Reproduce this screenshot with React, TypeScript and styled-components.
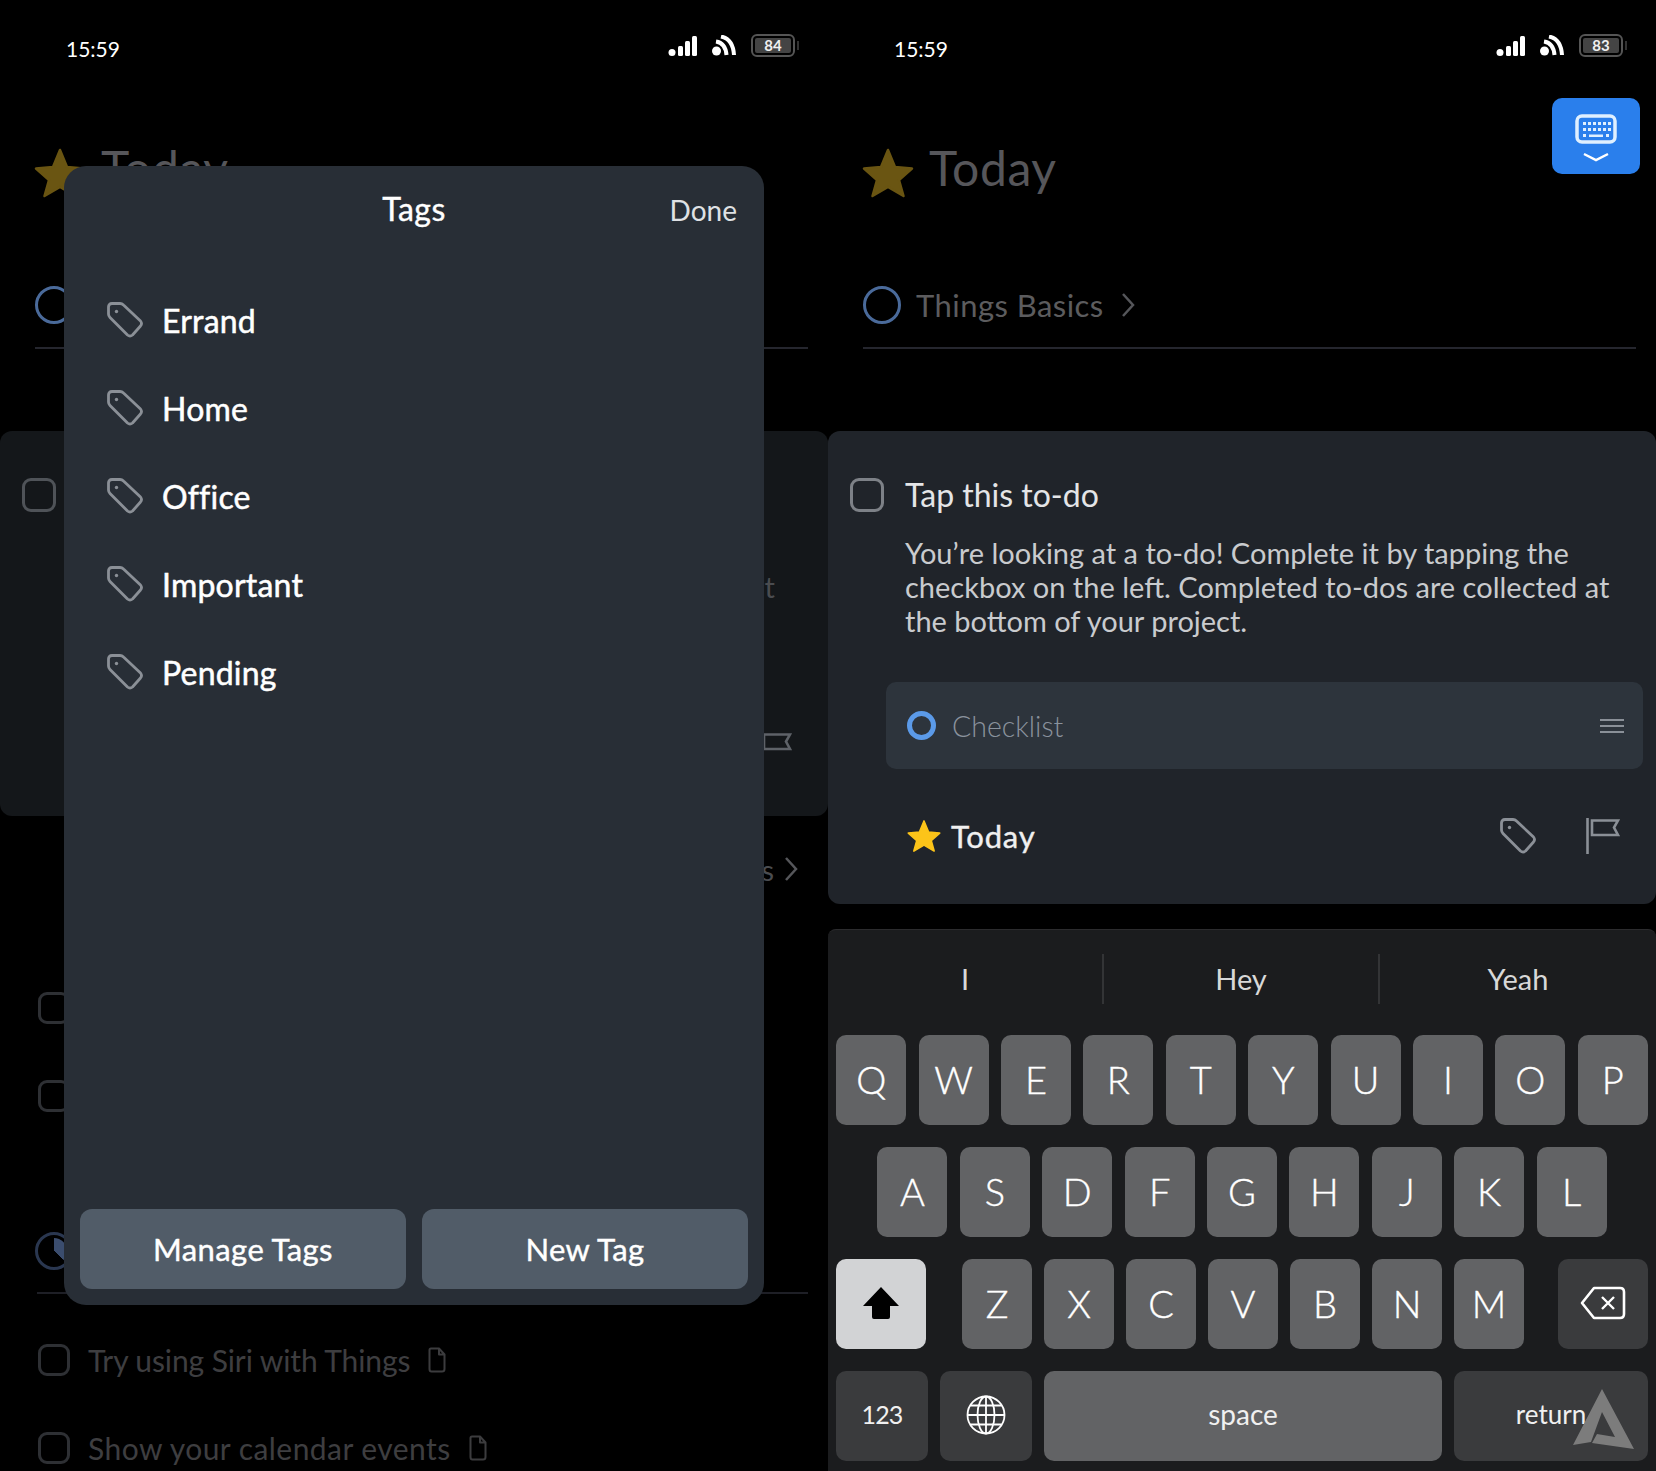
import React from 'react';
import styled, { createGlobalStyle } from 'styled-components';

const GlobalStyle = createGlobalStyle`
  html, body {
    margin: 0;
    padding: 0;
    background: #000;
  }
  body {
    font-family: Lato, "Noto Sans", sans-serif;
    color: #fff;
  }
`;

const Page = styled.div`
  display: grid;
  grid-template-columns: 828px 828px;
  width: 1656px;
  height: 1471px;
  overflow: hidden;
  background: #000;
`;

const Phone = styled.div`
  position: relative;
  display: flex;
  flex-direction: column;
  height: 1471px;
  overflow: hidden;
`;

/* status bar */
const StatusBar = styled.div`
  display: flex;
  justify-content: space-between;
  align-items: flex-start;
  height: 123px;
  padding: 34px 29px 0 66px;
  box-sizing: border-box;
`;

const Time = styled.span`
  font-size: 21px;
  line-height: 30px;
`;

const StatusIcons = styled.div`
  display: flex;
  align-items: center;
  height: 23px;
`;

const Battery = styled.div`
  display: flex;
  justify-content: center;
  align-items: center;
  width: 44px;
  height: 23px;
  margin-left: 15px;
  box-sizing: border-box;
  border: 2px solid #555;
  border-radius: 6px;
  padding: 2px;
`;

const BatteryLevel = styled.span`
  width: 100%;
  height: 100%;
  background: #444;
  border-radius: 2px;
  color: #f0f0f0;
  font-size: 15px;
  font-weight: 700;
  line-height: 15px;
  text-align: center;
`;

const BatteryNub = styled.span`
  width: 2px;
  height: 9px;
  margin-left: 2px;
  background: #333;
`;

/* page heading */
const Heading = styled.div`
  display: flex;
  align-items: center;
  gap: 15px;
  height: 100px;
  padding-left: 34px;
`;

const HeadingText = styled.span`
  margin-top: -10px;
  font-size: 48px;
  line-height: 56px;
  letter-spacing: 0.6px;
  color: #56565a;
`;

const ProjectRow = styled.div`
  display: flex;
  align-items: center;
  height: 85px;
  padding-bottom: 2px;
  box-sizing: border-box;
  margin: 41px 20px 0 35px;
  border-bottom: 2px solid #25262e;
`;

const RingIcon = styled.span<{ $color: string; $wedge?: string }>`
  width: 38px;
  height: 38px;
  box-sizing: border-box;
  border: 3px solid ${p => p.$color};
  border-radius: 50%;
  flex: none;
  ${p =>
    p.$wedge
      ? `padding: 3px; background: conic-gradient(${p.$wedge} 0 135deg, transparent 135deg) content-box;`
      : ''}
`;

const ProjectName = styled.span`
  margin-left: 15px;
  font-size: 31px;
  letter-spacing: 0.45px;
  color: #5c5c5e;
`;

const ChevronWrap = styled.span<{ $gap: number }>`
  display: flex;
  margin-left: ${p => p.$gap}px;
`;

/* to-do card */
const Card = styled.div<{ $height: number; $bg: string }>`
  display: flex;
  flex-direction: column;
  height: ${p => p.$height}px;
  margin-top: 82px;
  padding-top: 47px;
  box-sizing: border-box;
  background: ${p => p.$bg};
  border-radius: 12px;
`;

const TodoHead = styled.div`
  display: flex;
  align-items: center;
  gap: 21px;
  padding-left: 22px;
`;

const CheckBox = styled.span<{ $size?: number; $color: string }>`
  display: block;
  flex: none;
  width: ${p => p.$size ?? 34}px;
  height: ${p => p.$size ?? 34}px;
  box-sizing: border-box;
  border: 3px solid ${p => p.$color};
  border-radius: 9px;
`;

const TodoTitle = styled.span`
  font-size: 32px;
  line-height: 34px;
  color: #e4e5e7;
`;

const Notes = styled.p`
  margin: 24px 0 0 77px;
  font-size: 29px;
  line-height: 34px;
  color: #c9cbce;
  white-space: nowrap;
`;

const Checklist = styled.div`
  display: flex;
  align-items: center;
  height: 87px;
  margin: 44px 13px 0 58px;
  padding: 0 19px 0 21px;
  box-sizing: border-box;
  background: #2d343c;
  border-radius: 10px;
`;

const ChecklistRing = styled.span`
  flex: none;
  width: 29px;
  height: 29px;
  box-sizing: border-box;
  border: 5px solid #5b9ae8;
  border-radius: 50%;
`;

const ChecklistText = styled.span`
  flex: 1;
  margin-left: 16px;
  font-size: 28.5px;
  font-weight: 300;
  color: #8a929c;
`;

const Grip = styled.span`
  position: relative;
  width: 24px;
  height: 14px;
  box-sizing: border-box;
  border-top: 2px solid #8a9098;
  border-bottom: 2px solid #8a9098;
  &::after {
    content: '';
    position: absolute;
    left: 0;
    right: 0;
    top: 4px;
    height: 2px;
    background: #8a9098;
  }
`;

const WhenRow = styled.div`
  display: flex;
  align-items: center;
  height: 36px;
  margin-top: 49px;
  padding: 0 36px 0 79px;
`;

const WhenLabel = styled.span`
  flex: 1;
  margin-left: 10px;
  font-size: 31px;
  letter-spacing: 0.8px;
  color: #f0f0f0;
  -webkit-text-stroke: 0.4px #f0f0f0;
`;

const WhenActions = styled.div`
  display: flex;
  gap: 50px;
`;

/* keyboard */
const KeyboardToggle = styled.div`
  position: absolute;
  top: 98px;
  right: 16px;
  display: flex;
  justify-content: center;
  align-items: center;
  width: 88px;
  height: 76px;
  background: #2a7fec;
  border-radius: 10px;
`;

const Keyboard = styled.div`
  position: relative;
  flex: 1;
  display: flex;
  flex-direction: column;
  margin-top: 25px;
  background: #1b1c1e;
  border-top: 1px solid #2c2c2e;
  border-radius: 8px 8px 0 0;
`;

const Suggestions = styled.div`
  display: grid;
  grid-template-columns: 274px 276px 1fr;
  align-items: center;
  height: 105px;
`;

const Suggestion = styled.span<{ $divider?: boolean }>`
  height: 50px;
  line-height: 50px;
  margin-top: -8px;
  text-align: center;
  font-size: 29px;
  color: #d8d8d8;
  border-left: ${p => (p.$divider ? '2px solid #333436' : 'none')};
`;

const KeyRows = styled.div`
  display: flex;
  flex-direction: column;
  gap: 22px;
`;

const KeyRow = styled.div<{ $between?: boolean; $gap?: number }>`
  display: flex;
  justify-content: ${p => (p.$between ? 'space-between' : 'center')};
  gap: ${p => p.$gap ?? 12}px;
  padding: 0 8px;
`;

const Letters = styled.div`
  display: flex;
  gap: 12px;
  margin-left: 2px;
`;

const Key = styled.div<{ $tone?: 'letter' | 'dark' | 'light'; $width?: number; $fill?: boolean }>`
  display: flex;
  justify-content: center;
  align-items: center;
  flex: ${p => (p.$fill ? '1' : 'none')};
  width: ${p => p.$width ?? 70}px;
  height: 90px;
  padding-bottom: 3px;
  box-sizing: border-box;
  border-radius: 10px;
  font-size: 38px;
  font-weight: 300;
  color: #fff;
  -webkit-text-stroke: 0.4px #fff;
  background: ${p =>
    p.$tone === 'dark' ? '#3a3b3d' : p.$tone === 'light' ? '#d2d3d5' : '#626365'};
`;

const KeyLabel = styled.span<{ $size: number; $track?: number }>`
  margin-top: -2px;
  font-size: ${p => p.$size}px;
  font-weight: 400;
  letter-spacing: ${p => p.$track ?? 0}px;
  color: #f0f0f0;
  -webkit-text-stroke: 0;
`;

const Watermark = styled.div`
  position: absolute;
  right: 22px;
  bottom: 22px;
  display: flex;
`;

/* left phone, everything dimmed behind the sheet */
const StubRow = styled.div<{ $top: number; $right: number }>`
  display: flex;
  justify-content: flex-end;
  align-items: center;
  height: 36px;
  margin-top: ${p => p.$top}px;
  padding-right: ${p => p.$right}px;
  font-size: 29px;
  color: #4a4c50;
`;

const DimBox = styled.div<{ $top: number }>`
  margin: ${p => p.$top}px 0 0 38px;
`;

const DimProject = styled.div`
  display: flex;
  align-items: center;
  height: 43px;
  margin: 117px 20px 0 35px;
`;

const DimDivider = styled.div`
  height: 2px;
  margin: 20px 20px 0 37px;
  background: #1e1f26;
`;

const DimTodo = styled.div<{ $top: number; $track: number }>`
  display: flex;
  align-items: center;
  gap: 18px;
  margin: ${p => p.$top}px 0 0 38px;
  font-size: 30px;
  line-height: 34px;
  letter-spacing: ${p => p.$track}px;
  color: #3e3e40;
`;

/* tags sheet */
const Sheet = styled.div`
  position: absolute;
  top: 166px;
  left: 64px;
  display: flex;
  flex-direction: column;
  width: 700px;
  height: 1139px;
  background: #282e36;
  border-radius: 22px;
`;

const SheetHeader = styled.div`
  display: grid;
  grid-template-columns: 1fr auto 1fr;
  align-items: center;
  height: 84px;
  padding: 0 27px;
`;

const SheetTitle = styled.span`
  font-size: 32px;
  letter-spacing: 0.5px;
  color: #fff;
  -webkit-text-stroke: 0.4px #fff;
`;

const DoneLink = styled.span`
  justify-self: end;
  margin-top: 4px;
  font-size: 28px;
  color: #dfe1e4;
`;

const TagList = styled.ul`
  flex: 1;
  margin: 26px 0 0;
  padding: 0 0 0 43px;
  list-style: none;
`;

const TagItem = styled.li`
  display: flex;
  align-items: center;
  gap: 19px;
  height: 88px;
  font-size: 32px;
  letter-spacing: 0.2px;
  color: #fff;
  -webkit-text-stroke: 0.5px #fff;
`;

const SheetFooter = styled.div`
  display: grid;
  grid-template-columns: 1fr 1fr;
  gap: 16px;
  padding: 0 16px 16px;
`;

const SheetButton = styled.button`
  height: 80px;
  border: 0;
  border-radius: 12px;
  background: #515c68;
  font-family: inherit;
  font-size: 31px;
  letter-spacing: 0.4px;
  color: #fff;
  -webkit-text-stroke: 0.4px #fff;
`;

/* drawings */
const Star = ({ size, color }: { size: number; color: string }) => (
  <svg width={size} height={size} viewBox="0 0 52 52" style={{ flex: 'none' }}>
    <path
      d="M26 3l7 17 17 1.5-13 11.5 4.5 16L26 40l-15.5 9 4.5-16L2 21.5 19 20z"
      fill={color}
      stroke={color}
      strokeWidth="2.5"
      strokeLinejoin="round"
    />
  </svg>
);

const Tag = ({ color = '#8b9097' }: { color?: string }) => (
  <svg width="36" height="36" viewBox="0 0 36 36" fill="none" style={{ flex: 'none' }}>
    <path
      d="M5 1.5H13Q15 1.5 16.5 3L33.5 19Q35.5 21.5 33.5 24L25.5 33Q23 35 20.5 33L3 15.5Q1.5 14 1.5 12V5Q1.5 1.5 5 1.5Z"
      stroke={color}
      strokeWidth="2.8"
      strokeLinejoin="round"
    />
    <circle cx="9.5" cy="9.5" r="1.7" fill={color} />
  </svg>
);

const Flag = ({ color = '#8b9097' }: { color?: string }) => (
  <svg width="34" height="36" viewBox="0 0 34 36" fill="none">
    <path d="M1.5 0v36" stroke={color} strokeWidth="2.6" />
    <path d="M6 2.5h26l-4 7 4 7.5H6z" stroke={color} strokeWidth="2.6" />
  </svg>
);

const Chevron = ({ color }: { color: string }) => (
  <svg width="14" height="26" viewBox="0 0 14 26" fill="none">
    <path d="M2 2l10 11L2 24" stroke={color} strokeWidth="2.5" />
  </svg>
);

const DocIcon = ({ color }: { color: string }) => (
  <svg width="18" height="26" viewBox="0 0 18 26" fill="none">
    <path
      d="M3 1.5h8l5.5 6V22q0 2.5-2.5 2.5H3.5Q1.5 24.5 1.5 22V3q0-1.5 1.5-1.5zM11 1.5v6h5.5"
      stroke={color}
      strokeWidth="2"
      strokeLinejoin="round"
    />
  </svg>
);

const SignalIcon = () => (
  <svg width="30" height="20" viewBox="0 0 30 20" fill="#fff">
    <circle cx="4" cy="16.5" r="3.5" />
    <rect x="10" y="10" width="5" height="10" rx="1.5" />
    <rect x="17" y="5" width="5" height="15" rx="1.5" />
    <rect x="24" y="0" width="5" height="20" rx="1.5" />
  </svg>
);

const WifiIcon = () => (
  <svg width="24" height="21" viewBox="0 0 24 21" fill="none" style={{ marginLeft: 14 }}>
    <circle cx="4.5" cy="16" r="4.5" fill="#fff" />
    <path d="M4 6.5Q13.5 8 14.5 20" stroke="#fff" strokeWidth="4" />
    <path d="M9 1.5Q21 4 22 20" stroke="#fff" strokeWidth="4" />
  </svg>
);

const KeyboardGlyph = () => (
  <svg width="42" height="48" viewBox="0 0 42 48" fill="none" style={{ marginTop: 4 }}>
    <rect x="2" y="2" width="38" height="26" rx="5" stroke="#dff0ff" strokeWidth="3.5" />
    <g fill="#dff0ff">
      {[8, 14].flatMap(y =>
        [8, 13, 18, 23, 28, 33].map(x => <rect key={`${x}-${y}`} x={x} y={y} width="3" height="3" />)
      )}
      <rect x="8" y="20" width="3" height="3" />
      <rect x="14" y="20.5" width="14" height="2.5" />
      <rect x="31" y="20" width="3" height="3" />
    </g>
    <path d="M9 40l12 6 12-6" stroke="#fff" strokeWidth="2.5" />
  </svg>
);

const ShiftArrow = () => (
  <svg width="38" height="34" viewBox="0 0 38 34">
    <path d="M19 1L37 20H28V31q0 2-2 2H12q-2 0-2-2V20H1z" fill="#000" />
  </svg>
);

const BackspaceIcon = () => (
  <svg width="46" height="34" viewBox="0 0 46 34" fill="none">
    <path
      d="M14 2h26q4 0 4 4v22q0 4-4 4H14L2 17z"
      stroke="#fff"
      strokeWidth="2.6"
      strokeLinejoin="round"
    />
    <path d="M22 11l12 12M34 11L22 23" stroke="#fff" strokeWidth="2.4" />
  </svg>
);

const GlobeIcon = () => (
  <svg width="40" height="40" viewBox="0 0 40 40" fill="none" stroke="#fff" strokeWidth="1.8">
    <circle cx="20" cy="20" r="18.5" />
    <ellipse cx="20" cy="20" rx="8.5" ry="18.5" />
    <path d="M20 1.5v37M1.5 20h37M4.5 10.5h31M4.5 29.5h31" />
  </svg>
);

const SiteMark = () => (
  <svg width="61" height="60" viewBox="0 0 61 60" fill="#7c7c7c">
    <path d="M29 0L61 60L19 54L24 45L42 48L29 23L18 53L0 56Z" />
  </svg>
);

const TAGS = ['Errand', 'Home', 'Office', 'Important', 'Pending'];
const ROW_ONE = ['Q', 'W', 'E', 'R', 'T', 'Y', 'U', 'I', 'O', 'P'];
const ROW_TWO = ['A', 'S', 'D', 'F', 'G', 'H', 'J', 'K', 'L'];
const ROW_THREE = ['Z', 'X', 'C', 'V', 'B', 'N', 'M'];

const Status = ({ level }: { level: number }) => (
  <StatusBar>
    <Time>15:59</Time>
    <StatusIcons>
      <SignalIcon />
      <WifiIcon />
      <Battery>
        <BatteryLevel>{level}</BatteryLevel>
      </Battery>
      <BatteryNub />
    </StatusIcons>
  </StatusBar>
);

const TodayHeading = () => (
  <Heading>
    <Star size={52} color="#6a5512" />
    <HeadingText>Today</HeadingText>
  </Heading>
);

function TagsPhone(): JSX.Element {
  return (
    <Phone>
      <Status level={84} />
      <TodayHeading />
      <ProjectRow>
        <RingIcon $color="#4a6a9a" />
      </ProjectRow>
      <Card $height={385} $bg="#14171a">
        <TodoHead>
          <CheckBox $color="#4f5358" />
        </TodoHead>
        <StubRow $top={56} $right={53}>t</StubRow>
        <StubRow $top={128} $right={36}>
          <Flag color="#5e6268" />
        </StubRow>
      </Card>
      <StubRow $top={35} $right={30}>
        <span>s</span>
        <ChevronWrap $gap={10}>
          <Chevron color="#55565a" />
        </ChevronWrap>
      </StubRow>
      <DimBox $top={105}>
        <CheckBox $size={32} $color="#2e3034" />
      </DimBox>
      <DimBox $top={56}>
        <CheckBox $size={32} $color="#2e3034" />
      </DimBox>
      <DimProject>
        <RingIcon $color="#2a3750" $wedge="#3b4d6e" />
      </DimProject>
      <DimDivider />
      <DimTodo $top={49} $track={-0.1}>
        <CheckBox $size={32} $color="#2e3034" />
        Try using Siri with Things
        <DocIcon color="#3c3c3e" />
      </DimTodo>
      <DimTodo $top={54} $track={0.45}>
        <CheckBox $size={32} $color="#2e3034" />
        Show your calendar events
        <DocIcon color="#3c3c3e" />
      </DimTodo>

      <Sheet>
        <SheetHeader>
          <span />
          <SheetTitle>Tags</SheetTitle>
          <DoneLink>Done</DoneLink>
        </SheetHeader>
        <TagList>
          {TAGS.map(tag => (
            <TagItem key={tag}>
              <Tag />
              {tag}
            </TagItem>
          ))}
        </TagList>
        <SheetFooter>
          <SheetButton>Manage Tags</SheetButton>
          <SheetButton>New Tag</SheetButton>
        </SheetFooter>
      </Sheet>
    </Phone>
  );
}

function EditPhone(): JSX.Element {
  return (
    <Phone>
      <Status level={83} />
      <TodayHeading />
      <ProjectRow>
        <RingIcon $color="#4a6a9a" />
        <ProjectName>Things Basics</ProjectName>
        <ChevronWrap $gap={17}>
          <Chevron color="#55565a" />
        </ChevronWrap>
      </ProjectRow>
      <KeyboardToggle>
        <KeyboardGlyph />
      </KeyboardToggle>

      <Card $height={473} $bg="#20242a">
        <TodoHead>
          <CheckBox $color="#7d8187" />
          <TodoTitle>Tap this to-do</TodoTitle>
        </TodoHead>
        <Notes>
          You’re looking at a to-do! Complete it by tapping the
          <br />
          checkbox on the left. Completed to-dos are collected at
          <br />
          the bottom of your project.
        </Notes>
        <Checklist>
          <ChecklistRing />
          <ChecklistText>Checklist</ChecklistText>
          <Grip />
        </Checklist>
        <WhenRow>
          <Star size={34} color="#fcc419" />
          <WhenLabel>Today</WhenLabel>
          <WhenActions>
            <Tag />
            <Flag />
          </WhenActions>
        </WhenRow>
      </Card>

      <Keyboard>
        <Suggestions>
          <Suggestion>I</Suggestion>
          <Suggestion $divider>Hey</Suggestion>
          <Suggestion $divider>Yeah</Suggestion>
        </Suggestions>
        <KeyRows>
          <KeyRow $gap={12.4}>
            {ROW_ONE.map(k => (
              <Key key={k}>{k}</Key>
            ))}
          </KeyRow>
          <KeyRow $gap={12.4}>
            {ROW_TWO.map(k => (
              <Key key={k}>{k}</Key>
            ))}
          </KeyRow>
          <KeyRow $between>
            <Key $tone="light" $width={90}>
              <ShiftArrow />
            </Key>
            <Letters>
              {ROW_THREE.map(k => (
                <Key key={k}>{k}</Key>
              ))}
            </Letters>
            <Key $tone="dark" $width={90}>
              <BackspaceIcon />
            </Key>
          </KeyRow>
          <KeyRow>
            <Key $tone="dark" $width={92}>
              <KeyLabel $size={25} $track={-0.8}>123</KeyLabel>
            </Key>
            <Key $tone="dark" $width={92}>
              <GlobeIcon />
            </Key>
            <Key $fill>
              <KeyLabel $size={28}>space</KeyLabel>
            </Key>
            <Key $tone="dark" $width={194}>
              <KeyLabel $size={26}>return</KeyLabel>
            </Key>
          </KeyRow>
        </KeyRows>
        <Watermark>
          <SiteMark />
        </Watermark>
      </Keyboard>
    </Phone>
  );
}

export default function App(): JSX.Element {
  return (
    <Page>
      <GlobalStyle />
      <TagsPhone />
      <EditPhone />
    </Page>
  );
}
